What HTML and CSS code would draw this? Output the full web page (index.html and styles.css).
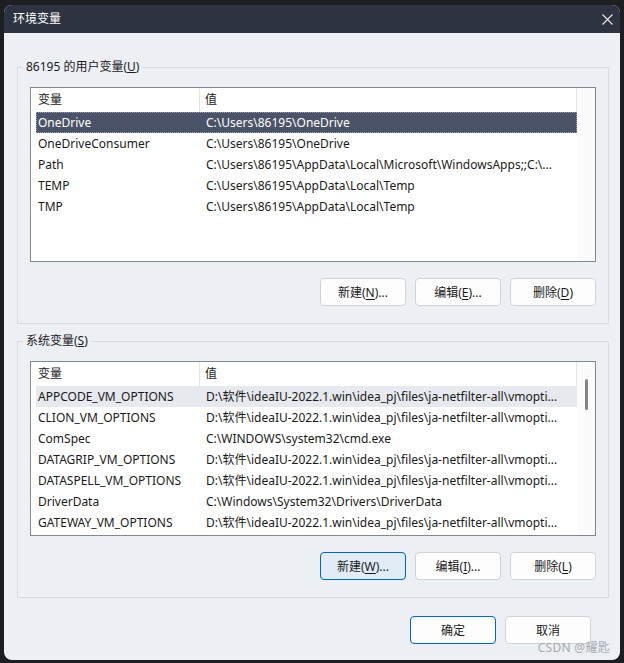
FILE: index.html
```html
<!DOCTYPE html>
<html lang="zh-CN">
<head>
    <meta charset="UTF-8">
    <title>环境变量</title>
    <link rel="stylesheet" href="styles.css">
</head>
<body>
    <div class="window">
        <div class="titlebar">
            <span class="title">环境变量</span>
            <svg class="close" width="11" height="11" viewBox="0 0 11 11">
                <path d="M0.5 0.5 L10.5 10.5 M10.5 0.5 L0.5 10.5" stroke="#e8e8e8" stroke-width="1.1" fill="none"/>
            </svg>
        </div>

        <div class="content">
            <fieldset class="group group-user">
                <legend>86195 的用户变量(<u>U</u>)</legend>
                <div class="list">
                    <div class="list-body">
                        <div class="list-head">
                            <div class="head-name">变量</div>
                            <div class="head-value">值</div>
                        </div>
                        <div class="row selected"><span class="name">OneDrive</span><span class="value">C:\Users\86195\OneDrive</span></div>
                        <div class="row"><span class="name">OneDriveConsumer</span><span class="value">C:\Users\86195\OneDrive</span></div>
                        <div class="row"><span class="name">Path</span><span class="value">C:\Users\86195\AppData\Local\Microsoft\WindowsApps;;C:\...</span></div>
                        <div class="row"><span class="name">TEMP</span><span class="value">C:\Users\86195\AppData\Local\Temp</span></div>
                        <div class="row"><span class="name">TMP</span><span class="value">C:\Users\86195\AppData\Local\Temp</span></div>
                    </div>
                    <div class="scroll-area"></div>
                </div>
                <div class="btn-row">
                    <button class="btn">新建(<u>N</u>)...</button>
                    <button class="btn">编辑(<u>E</u>)...</button>
                    <button class="btn">删除(<u>D</u>)</button>
                </div>
            </fieldset>

            <fieldset class="group group-system">
                <legend>系统变量(<u>S</u>)</legend>
                <div class="list">
                    <div class="list-body">
                        <div class="list-head">
                            <div class="head-name">变量</div>
                            <div class="head-value">值</div>
                        </div>
                        <div class="row hover"><span class="name">APPCODE_VM_OPTIONS</span><span class="value">D:\软件\ideaIU-2022.1.win\idea_pj\files\ja-netfilter-all\vmopti...</span></div>
                        <div class="row"><span class="name">CLION_VM_OPTIONS</span><span class="value">D:\软件\ideaIU-2022.1.win\idea_pj\files\ja-netfilter-all\vmopti...</span></div>
                        <div class="row"><span class="name">ComSpec</span><span class="value">C:\WINDOWS\system32\cmd.exe</span></div>
                        <div class="row"><span class="name">DATAGRIP_VM_OPTIONS</span><span class="value">D:\软件\ideaIU-2022.1.win\idea_pj\files\ja-netfilter-all\vmopti...</span></div>
                        <div class="row"><span class="name">DATASPELL_VM_OPTIONS</span><span class="value">D:\软件\ideaIU-2022.1.win\idea_pj\files\ja-netfilter-all\vmopti...</span></div>
                        <div class="row"><span class="name">DriverData</span><span class="value">C:\Windows\System32\Drivers\DriverData</span></div>
                        <div class="row"><span class="name">GATEWAY_VM_OPTIONS</span><span class="value">D:\软件\ideaIU-2022.1.win\idea_pj\files\ja-netfilter-all\vmopti...</span></div>
                    </div>
                    <div class="scroll-area">
                        <div class="thumb"></div>
                    </div>
                </div>
                <div class="btn-row">
                    <button class="btn btn-focus">新建(<u>W</u>)...</button>
                    <button class="btn">编辑(<u>I</u>)...</button>
                    <button class="btn">删除(<u>L</u>)</button>
                </div>
            </fieldset>

            <div class="footer">
                <button class="btn btn-default">确定</button>
                <button class="btn">取消</button>
            </div>
        </div>
    </div>

    <div class="watermark">CSDN @耀匙</div>
</body>
</html>
```

FILE: styles.css
```css
/* Windows 11 style dialog */
html, body {
    margin: 0;
    height: 100%;
}

body {
    background: #1c1e22;
    padding: 5px 0 0 4px;
    box-sizing: border-box;
    font-family: "Noto Sans", "Noto Sans CJK SC", sans-serif;
    font-size: 12px;
    color: #1a1a1a;
    overflow: hidden;
    position: relative;
}

.window {
    width: 616px;
    height: 655px;
    background: #eceff4;
    border-radius: 8px;
    overflow: hidden;
}

.titlebar {
    height: 28px;
    background: #2d3340;
    display: flex;
    align-items: center;
    justify-content: space-between;
    padding: 0 7px 0 9px;
}

.title {
    color: #ffffff;
    font-size: 12px;
    line-height: 16px;
}

.close {
    display: block;
    margin-top: 1px;
}

.content {
    padding-left: 13px;
}

.group {
    width: 592px;
    box-sizing: border-box;
    margin: 0;
    padding: 0 12px 17px 12px;
    border: 1px solid #d8dce2;
    min-inline-size: 0;
}

.group-user {
    margin-top: 26px;
}

.group-system {
    margin-top: 9px;
}

.group legend {
    font-size: 12px;
    line-height: 16px;
    padding: 0 3px;
    margin-left: -7px;
    color: #1a1a1a;
}

.list {
    display: flex;
    height: 175px;
    box-sizing: border-box;
    background: #ffffff;
    border: 1px solid #828790;
    margin-top: 12px;
}

.list-body {
    width: 547px;
    overflow: hidden;
}

.list-head {
    display: flex;
    height: 24px;
    line-height: 24px;
    border-right: 1px solid #e5e5e5;
    box-sizing: border-box;
}

.head-name {
    width: 169px;
    padding-left: 7px;
    box-sizing: border-box;
    border-right: 1px solid #e5e5e5;
}

.head-value {
    padding-left: 5px;
}

.row {
    display: flex;
    height: 21px;
    line-height: 21px;
    margin-left: 5px;
    white-space: nowrap;
}

.row .name {
    width: 164px;
    padding-left: 2px;
    box-sizing: border-box;
    flex-shrink: 0;
}

.row .value {
    padding-left: 6px;
    overflow: hidden;
}

.row.selected {
    background: #4a5367;
    color: #ffffff;
    outline: 1px dotted #9aa1ad;
    outline-offset: -1px;
}

.row.hover {
    background: #e6e9ee;
}

.scroll-area {
    width: 18px;
    background: #fbfbfb;
}

.thumb {
    width: 3px;
    height: 31px;
    margin: 17px 0 0 8px;
    border-radius: 2px;
    background: #858585;
}

.btn-row {
    display: flex;
    justify-content: flex-end;
    gap: 9px;
    margin-top: 16px;
}

.btn {
    width: 86px;
    height: 28px;
    box-sizing: border-box;
    background: #fdfdfd;
    border: 1px solid #d0d3d8;
    border-radius: 4px;
    font-family: inherit;
    font-size: 12px;
    color: #1a1a1a;
    padding: 0;
}

.btn u {
    text-underline-offset: 2px;
}

.btn-focus {
    background: #e1ecf7;
    border-color: #0067c0;
}

.btn-default {
    border-color: #0067c0;
}

.footer {
    display: flex;
    justify-content: flex-end;
    gap: 9px;
    margin: 18px 29px 0 0;
}

.watermark {
    position: absolute;
    right: 14px;
    bottom: 7px;
    font-size: 12px;
    color: #a8abb0;
    letter-spacing: 0.3px;
}
```
